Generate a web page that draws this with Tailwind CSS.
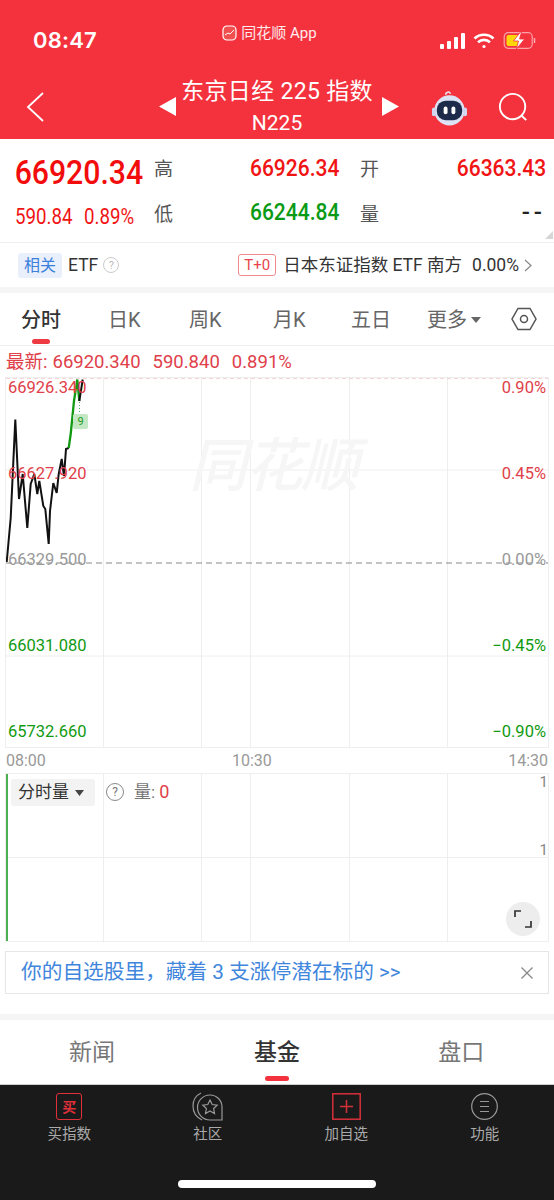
<!DOCTYPE html>
<html lang="zh"><head><meta charset="utf-8">
<script src="https://cdn.jsdelivr.net/npm/@tailwindcss/browser@4"></script>
</head>
<body class="m-0 bg-white">
<div class="relative flex h-[1200px] w-[554px] flex-col overflow-hidden bg-white font-['Roboto','Noto_Sans_CJK_SC',sans-serif]">

<!-- red header -->
<header class="relative h-[139px] shrink-0 bg-[#f4323e] text-white">
  <div class="flex h-[78px] items-start justify-between pl-[33px] pr-[17px]">
    <span class="mt-[25px] font-['Inter'] text-[22px] font-semibold leading-[30px] tracking-[0.2px]">08:47</span>
    <div class="ml-[2px] mt-[23px] flex items-center gap-[4px] text-[15px] leading-[20px] text-white/90">
      <svg width="15" height="16" viewBox="0 0 15 16" fill="none" stroke="#fff" stroke-width="1.2"><rect x="1" y="1" width="13" height="14" rx="4" fill="#f0504f"/><path d="M3 10l3-2 2 1 4-4" stroke-width="1"/></svg>
      <span>同花顺 App</span>
    </div>
    <div class="mt-[32px] flex items-center gap-[8px]">
      <svg width="25" height="16" viewBox="0 0 25 16" fill="#fff"><rect x="0" y="11" width="4" height="5" rx="1"/><rect x="7" y="8" width="4" height="8" rx="1"/><rect x="14" y="4" width="4" height="12" rx="1"/><rect x="21" y="0" width="4" height="16" rx="1"/></svg>
      <svg width="22" height="16" viewBox="0 0 22 16" fill="none" stroke="#fff" stroke-width="2.6"><path d="M1.5 5.5a14 14 0 0 1 19 0"/><path d="M5 9.2a9 9 0 0 1 12 0"/><circle cx="11" cy="13.5" r="1.6" fill="#fff" stroke="none"/></svg>
      <svg width="34" height="17" viewBox="0 0 33 17" fill="none"><rect x="0.7" y="0.7" width="28" height="15.6" rx="4" stroke="#fff" stroke-opacity=".55" stroke-width="1.2"/><rect x="3" y="3" width="13" height="11" rx="2" fill="#ffd60a"/><path d="M31 6v5" stroke="#fff" stroke-opacity=".6" stroke-width="1.5"/><path d="M17 0l-7 9h5l-2 8 8-10h-5l2-7z" fill="#fff" stroke="#f4323e" stroke-width=".8"/></svg>
    </div>
  </div>
  <div class="relative flex flex-col items-center">
    <div class="text-[23px] leading-[27px] tracking-[0.3px]">东京日经 225 指数</div>
    <div class="mt-[6px] text-[21px] leading-[24px]">N225</div>
    <svg class="absolute left-[159px] top-[19px]" width="17" height="19" viewBox="0 0 17 19" fill="#fff"><path d="M0 9.5 17 0v19z"/></svg>
    <svg class="absolute left-[382px] top-[19px]" width="17" height="19" viewBox="0 0 17 19" fill="#fff"><path d="M17 9.500 0 0v19z"/></svg>
    <svg class="absolute left-[26px] top-[14px]" width="18" height="30" viewBox="0 0 18 30" fill="none" stroke="#fff" stroke-width="1.8"><path d="M17 1 2 15l15 14"/></svg>
    <svg class="absolute left-[431px] top-[11px]" width="37" height="37" viewBox="0 0 38 38"><path d="M15 6c0-3 4-4 5-1" fill="none" stroke="#e8e8f5" stroke-width="1.5"/><circle cx="19" cy="22" r="15.500" fill="#dde3f4"/><rect x="1" y="19" width="4" height="9" rx="2" fill="#cfd6ee"/><rect x="33" y="19" width="4" height="9" rx="2" fill="#cfd6ee"/><rect x="6" y="12" width="26" height="20" rx="9" fill="#1e2a4a"/><rect x="13" y="18" width="4" height="8" rx="2" fill="#fff"/><rect x="21" y="18" width="4" height="8" rx="2" fill="#fff"/></svg>
    <svg class="absolute left-[498px] top-[14px]" width="31" height="31" viewBox="0 0 33 33" fill="none" stroke="#fff" stroke-width="2"><circle cx="15.500" cy="15.500" r="13.500"/><path d="M25 25l5 5"/></svg>
  </div>
</header>

<!-- quote -->
<section class="relative grid h-[104px] shrink-0 grid-cols-[154px_96px_110px_1fr] grid-rows-[44px_44px] pt-[8px] pr-[8px] border-b border-[#f0f0f0]">
  <div class="origin-left scale-x-[0.915] whitespace-nowrap pl-[16px] text-[33px] font-medium leading-[52px] text-[#f20c0c]">66920.34</div>
  <div class="pt-[9px] text-[19px] leading-[27px] text-[#555]">高</div>
  <div class="origin-left scale-x-[0.875] text-[24px] font-medium leading-[42px] text-[#f01414]">66926.34</div>
  <div class="relative flex justify-between">
    <span class="pt-[9px] text-[19px] leading-[27px] text-[#555]">开</span>
    <span class="origin-right scale-x-[0.875] text-[24px] font-medium leading-[42px] text-[#f01414]">66363.43</span>
  </div>
  <div class="flex gap-[12px] pl-[15px] pt-[11px] text-[22px] leading-[30px] text-[#f01414] whitespace-nowrap"><span class="w-[57px] origin-left scale-x-[0.85]">590.84</span><span class="origin-left scale-x-[0.85]">0.89%</span></div>
  <div class="pt-[10px] text-[19px] leading-[27px] text-[#555]">低</div>
  <div class="origin-left scale-x-[0.875] text-[24px] font-medium leading-[42px] text-[#0a9a16]">66244.84</div>
  <div class="relative flex justify-between">
    <span class="pt-[10px] text-[19px] leading-[27px] text-[#555]">量</span>
    <span class="pt-[1px] text-[24px] font-medium leading-[40px] tracking-[4px] text-[#222]">--</span>
  </div>
  <svg class="absolute bottom-[3px] right-[1px]" width="8" height="8" viewBox="0 0 8 8" fill="#d6d6d6"><path d="M8 0v8H0z"/></svg>
</section>

<!-- related ETF -->
<section class="flex h-[44px] shrink-0 items-center pl-[18px] pr-[22px] text-[17.500px] text-[#333]">
  <span class="rounded-[3px] bg-[#e9effb] px-[6px] text-[16px] leading-[25px] text-[#3b7fdb]">相关</span>
  <span class="ml-[6px]">ETF</span>
  <span class="ml-[5px] flex h-[16px] w-[16px] items-center justify-center rounded-full border border-[#ccc] text-[11px] leading-none text-[#bbb]">?</span>
  <span class="ml-auto rounded-[3px] border border-[#ef8a8e] px-[5px] text-[15px] leading-[20px] text-[#e8434c]">T+0</span>
  <span class="ml-[7px] whitespace-nowrap">日本东证指数 ETF 南方</span>
  <span class="ml-[10px]">0.00%</span>
  <svg class="ml-[5px]" width="8" height="13" viewBox="0 0 8 13" fill="none" stroke="#888" stroke-width="1.2"><path d="M1 1l6 5.500-6 5.500"/></svg>
</section>
<div class="h-[6px] shrink-0 bg-[#f5f5f5]"></div>

<!-- period tabs -->
<nav class="relative flex h-[53px] shrink-0 items-center border-b border-[#eee] pt-[2px] text-[20px] leading-none text-[#666]">
  <span class="absolute left-[21px] font-medium text-[#333]">分时</span>
  <span class="absolute left-[32px] top-[46px] h-[5px] w-[18px] rounded-full bg-[#ee3a41]"></span>
  <span class="absolute left-[108px]">日K</span>
  <span class="absolute left-[189px]">周K</span>
  <span class="absolute left-[273px]">月K</span>
  <span class="absolute left-[351px]">五日</span>
  <span class="absolute left-[427px]">更多</span>
  <svg class="absolute left-[471px] top-[24px]" width="10" height="6" viewBox="0 0 10 6" fill="#666"><path d="M0 0h10L5 6z"/></svg>
  <svg class="absolute left-[511px] top-[14px]" width="26" height="24" viewBox="0 0 26 24" fill="none" stroke="#555" stroke-width="1.500"><path d="M7 1.500h12l6 10.500-6 10.500H7L1 12z"/><circle cx="13" cy="12" r="3.500"/></svg>
</nav>

<div class="flex h-[31px] shrink-0 items-center pl-[6px] pt-[1px] text-[18.500px] leading-none text-[#e0404a] whitespace-nowrap"><span>最新:</span><span class="ml-[5px]">66920.340</span><span class="ml-[12px]">590.840</span><span class="ml-[12px]">0.891%</span></div>

<!-- chart -->
<section class="relative mx-[5px] h-[371px] w-[544px] shrink-0 border border-[#eee]">
  <svg class="absolute inset-0" width="542" height="369" viewBox="0 0 542 369" fill="none">
    <g stroke="#eeeeee"><path d="M0 92h542M0 278h542M97.500 0v369M195.500 0v369M244.500 0v369M343.500 0v369M441.500 0v369"/></g>
    <path d="M0 0h542" stroke="#e9a9a9" stroke-dasharray="4 3"/>
    <path d="M0 185h542" stroke="#888" stroke-dasharray="6 4"/>
    <path d="M.7 184 4.700 140 9.300 41.500 13 121 16.700 96 21.300 150 24.700 106 28.300 96 31.300 116 33.300 103 37.300 128 39.300 131 42.700 166 44 133 47.300 105 50.700 115 52.700 96 55.700 81 58 98 60 71 62.700 70" stroke="#111" stroke-width="2"/>
    <path d="M62.700 70 64.700 56 68 23 71.300 1.500 73.300 23" stroke="#119a11" stroke-width="2.300"/>
    <path d="M73.300 23 76.700 1.500" stroke="#111" stroke-width="2"/>
    <path d="M73.500 24v13" stroke="#4caf50" stroke-dasharray="1 2"/>
  </svg>
  <div class="absolute left-[67px] top-[36px] flex h-[15px] w-[15px] items-center justify-center rounded-[2px] bg-[#c4e8c4] text-[11px] leading-none text-[#1c9a1c]">9</div>
  <div class="absolute left-[183px] top-[53px] text-[58px] font-medium italic leading-[70px] tracking-[-2px] text-[#f6f6f6]">同花顺</div>
  <div class="absolute left-[2px] top-[0px] text-[16.500px] leading-[20px] text-[#e0404a]">66926.340</div>
  <div class="absolute left-[2px] top-[86px] text-[16.500px] leading-[20px] text-[#e0404a]">66627.920</div>
  <div class="absolute left-[2px] top-[172px] text-[16.500px] leading-[20px] text-[#999]">66329.500</div>
  <div class="absolute left-[2px] top-[258px] text-[16.500px] leading-[20px] text-[#119a11]">66031.080</div>
  <div class="absolute left-[2px] top-[344px] text-[16.500px] leading-[20px] text-[#119a11]">65732.660</div>
  <div class="absolute right-[2px] top-[0px] text-[16.500px] leading-[20px] text-[#e0404a]">0.90%</div>
  <div class="absolute right-[2px] top-[86px] text-[16.500px] leading-[20px] text-[#e0404a]">0.45%</div>
  <div class="absolute right-[2px] top-[172px] text-[16.500px] leading-[20px] text-[#999]">0.00%</div>
  <div class="absolute right-[2px] top-[258px] text-[16.500px] leading-[20px] text-[#119a11]">−0.45%</div>
  <div class="absolute right-[2px] top-[344px] text-[16.500px] leading-[20px] text-[#119a11]">−0.90%</div>
</section>

<div class="relative flex h-[25px] shrink-0 items-center justify-between pl-[6px] pr-[6px] text-[16px] leading-none text-[#999]"><span>08:00</span><span class="absolute left-[232px]">10:30</span><span>14:30</span></div>

<!-- volume -->
<section class="relative mx-[5px] h-[169px] w-[544px] shrink-0 border border-[#eee]">
  <svg class="absolute inset-0" width="542" height="167" viewBox="0 0 542 167" fill="none">
    <path d="M0 83.500h542M97.500 0v167M195.500 0v167M244.500 0v167M343.500 0v167M441.500 0v167" stroke="#eee"/>
    <path d="M1 0v167" stroke="#4caf50" stroke-width="2"/>
  </svg>
  <div class="absolute left-[5px] top-[5px] flex h-[27px] w-[84px] items-center gap-[6px] rounded-[3px] bg-[#f3f3f3] pl-[7px] text-[17px] text-[#333]">分时量<svg width="9" height="6" viewBox="0 0 9 6" fill="#444"><path d="M0 0h9L4.500 6z"/></svg></div>
  <div class="absolute left-[100px] top-[9px] flex h-[18px] w-[18px] items-center justify-center rounded-full border border-[#888] text-[12px] leading-none text-[#777]">?</div>
  <div class="absolute left-[128px] top-[7px] text-[17px] leading-[22px] text-[#777]">量: <span class="text-[18px] text-[#e0404a]">0</span></div>
  <div class="absolute right-[0px] top-[-2px] text-[15px] leading-[20px] text-[#888]">1</div>
  <div class="absolute right-[0px] top-[66px] text-[15px] leading-[20px] text-[#888]">1</div>
  <div class="absolute left-[500px] top-[128px] flex h-[34px] w-[34px] items-center justify-center rounded-full bg-[#ededed]">
    <svg width="18" height="18" viewBox="0 0 18 18" fill="none" stroke="#333" stroke-width="1.700"><path d="M1 7V1h6M17 11v6h-6"/></svg>
  </div>
</section>

<!-- banner -->
<aside class="mx-[5px] mt-[9px] flex h-[43px] w-[544px] shrink-0 items-center justify-between border border-[#e6e6e6] pl-[15px] pr-[15px]">
  <span class="whitespace-nowrap text-[20.700px] leading-none text-[#3f86dc]">你的自选股里，藏着 3 支涨停潜在标的 &gt;&gt;</span>
  <svg width="12" height="12" viewBox="0 0 12 12" fill="none" stroke="#888" stroke-width="1.300"><path d="M.5.500l11 11M11.500.500l-11 11"/></svg>
</aside>

<div class="mt-[20px] h-[6px] shrink-0 bg-[#f5f5f5]"></div>

<!-- content tabs -->
<nav class="relative grid h-[64px] shrink-0 grid-cols-3 text-[23px] leading-[65px] text-[#777]">
  <span class="pl-[69px]">新闻</span>
  <span class="text-center font-medium text-[#333]">基金</span>
  <span class="pl-[69px]">盘口</span>
  <span class="absolute left-[265px] top-[56px] h-[5px] w-[24px] rounded-full bg-[#f4323e]"></span>
</nav>

<!-- bottom bar -->
<footer class="relative flex-1 border-t border-[#cfcfcf] bg-[#1a1a1a]">
  <div class="grid grid-cols-4 pt-[8px] text-[14.500px] leading-[20px] text-[#aaa]">
    <div class="flex flex-col items-center gap-[5px]">
      <span class="flex h-[27px] w-[26px] items-center justify-center rounded-[3px] border-[1.500px] border-[#e0303a] text-[14px] font-bold leading-none text-[#e0303a]">买</span>
      <span>买指数</span>
    </div>
    <div class="flex flex-col items-center gap-[5px]">
      <svg width="32" height="30" viewBox="0 0 32 30" fill="none" stroke="#999" stroke-width="1.200" class="-mt-[1px] -mb-[2px]"><path d="M9 1C3 4 1 9 1 14c0 6 3 11 9 14"/><path d="M18 3a12 12 0 0 1 12 12v13H18A12.500 12.500 0 0 1 18 3z"/><path d="M18 8l2.200 4.500 5 .6-3.600 3.400.9 5-4.500-2.500-4.500 2.500.9-5-3.600-3.400 5-.6z"/></svg>
      <span>社区</span>
    </div>
    <div class="flex flex-col items-center gap-[5px]">
      <svg width="29" height="27" viewBox="0 0 29 27" fill="none" stroke="#d8303a" stroke-width="1.500"><rect x=".8" y=".8" width="27.400" height="25.400"/><path d="M14.500 7v13M8 13.500h13"/></svg>
      <span>加自选</span>
    </div>
    <div class="flex flex-col items-center gap-[5px]">
      <svg width="27" height="27" viewBox="0 0 27 27" fill="none" stroke="#999" stroke-width="1.200"><circle cx="13.500" cy="13.500" r="12.800"/><path d="M9 8.500h9M9 13.500h9M9 18.500h9"/></svg>
      <span>功能</span>
    </div>
  </div>
  <div class="absolute left-[178px] top-[95px] h-[8px] w-[198px] rounded-full bg-white"></div>
</footer>
</div>
</body></html>
